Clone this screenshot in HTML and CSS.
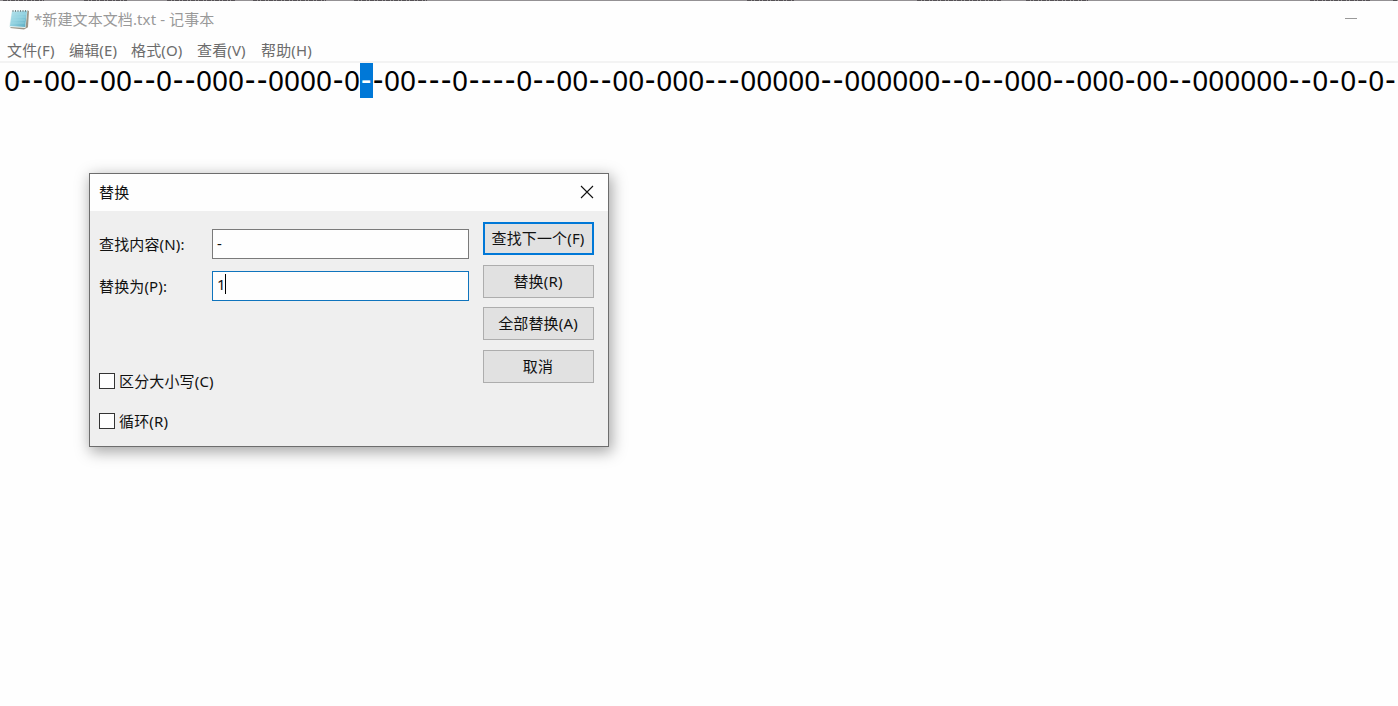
FILE: index.html
```
<!DOCTYPE html>
<html lang="zh-CN">
<head>
<meta charset="utf-8">
<title>记事本</title>
<link rel="stylesheet" href="styles.css">
</head>
<body>
<div class="window">
  <svg class="backdrop" width="1398" height="1" viewBox="0 0 1398 1"><path d="M0 .5H1398" stroke="#949194"/><path d="M3 .5h41M84 .5h43M167 .5h68M253 .5h73M354 .5h73M747 .5h48M917 .5h85M1026 .5h62M1310 .5h61M1393 .5h5" stroke="#555155" stroke-dasharray="4 1 2 1"/></svg>
  <header class="titlebar">
    <svg class="app-icon" width="22" height="22" viewBox="0 0 22 22">
      <defs><linearGradient id="page" x1="0" y1="0" x2="1" y2="1"><stop offset="0" stop-color="#b9e4ed"/><stop offset=".5" stop-color="#8fd0df"/><stop offset="1" stop-color="#56a9bf"/></linearGradient></defs>
      <path d="M2 20l14 1.400 4-2.200L21 3l-2-1z" fill="#9b9587"/>
      <path d="M4 2.500L19.500 2l-2 18L1 19z" fill="#e7f3f3"/>
      <path d="M4 3.500L19 3l-1.800 16L2 18z" fill="url(#page)"/>
      <path d="M4 6h14M3.500 9h14M3 12h14M2.500 15h14" stroke="#a5dbe5" stroke-width=".6"/>
      <path d="M5 2v2M7.500 2v2M10 2v2M12.500 2v2M15 2v2M17.500 2v2" stroke="#788b8e"/>
    </svg>
    <span class="title">*新建文本文档.txt - 记事本</span>
    <span class="minimize"></span>
  </header>
  <nav class="menu"><span>文件(F)</span><span>编辑(E)</span><span>格式(O)</span><span>查看(V)</span><span>帮助(H)</span></nav>
  <main class="editor">0<i>--</i>00<i>--</i>00<i>--</i>0<i>--</i>000<i>--</i>0000<i>-</i>0<mark><i>-</i></mark><i>-</i>00<i>---</i>0<i>----</i>0<i>--</i>00<i>--</i>00<i>-</i>000<i>---</i>00000<i>--</i>000000<i>--</i>0<i>--</i>000<i>--</i>000<i>-</i>00<i>--</i>000000<i>--</i>0<i>-</i>0<i>-</i>0<i>-</i></main>
</div>
<section class="dialog">
  <header class="dialog-title"><span>替换</span>
    <svg width="14" height="14" viewBox="0 0 14 14"><path d="M1 1l12 12M13 1L1 13" stroke="#111" stroke-width="1.100"/></svg>
  </header>
  <div class="dialog-body">
    <div class="form">
      <div class="field"><label>查找内容(N):</label><div class="input">-</div></div>
      <div class="field"><label>替换为(P):</label><div class="input focused">1<span class="caret"></span></div></div>
      <div class="check first"><span class="box"></span>区分大小写(C)</div>
      <div class="check"><span class="box"></span>循环(R)</div>
    </div>
    <div class="actions">
      <div class="button default">查找下一个(F)</div>
      <div class="button">替换(R)</div>
      <div class="button">全部替换(A)</div>
      <div class="button">取消</div>
    </div>
  </div>
</section>
</body>
</html>
```
FILE: styles.css
```
* { box-sizing: border-box; }
body {
  margin: 0;
  width: 1398px;
  height: 706px;
  overflow: hidden;
  background: #fefefe;
  color: #111;
  font: 15px/20px "Noto Sans", "Noto Sans CJK SC", sans-serif;
  letter-spacing: .15px;
  white-space: nowrap;
}
svg { display: block; flex: none; }
.titlebar { display: flex; height: 37px; padding: 7px 41px 0 8px; color: #999; }
.title { margin: 1px 0 0 4px; letter-spacing: .1px; }
.minimize { width: 12px; height: 1px; margin: 10px 0 0 auto; background: #999; }
.menu {
  display: grid;
  grid-template-columns: 62px 62px 66px 64px 60px;
  height: 25px;
  padding: 2px 7px 0;
  border-bottom: 2px solid #f3f3f3;
  color: #6c6c6c;
}
.editor { height: 35px; padding-left: 4px; color: #000; font-size: 28px; line-height: 35px; letter-spacing: -.02px; }
.editor i { font-style: normal; font-size: 32px; line-height: 0; letter-spacing: 1.700px; margin: 0 -.85px 0 .85px; }
.editor mark { display: inline-block; height: 35px; width: 13px; margin-right: -1px; background: #0078d7; color: #fff; vertical-align: top; }
.dialog {
  position: absolute;
  left: 89px;
  top: 173px;
  width: 520px;
  height: 274px;
  border: 1px solid #6d6d6d;
  background: #efefef;
  box-shadow: 2px 4px 14px 1px rgba(0, 0, 0, .35);
}
.dialog-title { display: flex; justify-content: space-between; align-items: center; height: 37px; padding: 0 14px 1px 9px; background: #fefefe; }
.dialog-body { display: flex; justify-content: space-between; padding: 11px 14px 0 9px; }
.form { width: 370px; padding-top: 7px; }
.field { display: flex; align-items: center; height: 30px; margin-bottom: 12px; }
.field label { width: 113px; }
.input { display: flex; width: 257px; height: 30px; padding: 3px 4px; border: 1px solid #7a7a7a; background: #fefefe; }
.input.focused { padding-top: 2px; border-color: #0f74bd; }
.caret { width: 1px; height: 20px; margin-left: -1px; background: #000; }
.check { display: flex; align-items: center; gap: 4px; height: 20px; margin-bottom: 20px; }
.check.first { margin-top: 70px; }
.box { width: 16px; height: 16px; border: 1px solid #333; background: #fefefe; }
.actions { display: grid; gap: 9.600px; grid-auto-rows: 33px; width: 111px; }
.button { display: flex; align-items: center; justify-content: center; padding: 0 1px 1px 0; border: 1px solid #adadad; background: #e1e1e1; }
.button.default { border: 2px solid #0078d7; }
```
